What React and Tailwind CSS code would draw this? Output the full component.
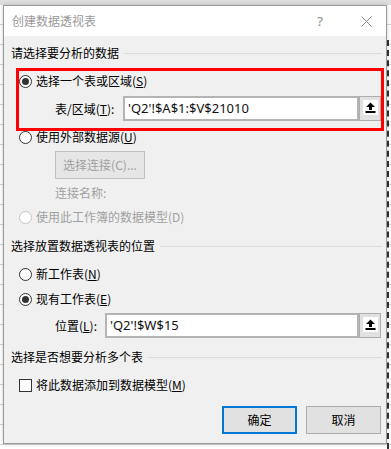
import React from "react";

const font = { fontFamily: '"Noto Sans CJK SC", "Noto Sans", sans-serif' };

function Radio({ checked, disabled }) {
  return (
    <span
      className={`flex h-[13px] w-[13px] shrink-0 items-center justify-center rounded-full border bg-white ${
        disabled ? "border-[#c4c4c4]" : "border-[#333333]"
      }`}
    >
      {checked && <span className="h-[7px] w-[7px] rounded-full bg-[#333333]" />}
    </span>
  );
}

function Header({ children }) {
  return (
    <div className="mt-[10px] flex h-[18px] items-center pl-[7px] pr-[4px]">
      <span className="text-[12px] leading-none text-black">{children}</span>
      <span className="ml-[5px] h-px flex-1 bg-[#dcdcdc]" />
    </div>
  );
}

function RefButton() {
  return (
    <div className="flex h-[25px] w-[22px] items-start justify-center border border-[#adadad] bg-[#e1e1e1] pt-[3px]">
      <div className="flex h-[15px] w-[15px] items-center justify-center bg-white">
        <svg width="11" height="11" viewBox="0 0 11 11">
          <path d="M5.5 0.5 L10 5 L7 5 L7 8 L4 8 L4 5 L1 5 Z" fill="#000" />
          <rect x="0.5" y="9" width="10" height="2" fill="#000" />
        </svg>
      </div>
    </div>
  );
}

function RefInput({ value, width }) {
  return (
    <div className="flex items-center">
      <div
        className={`flex h-[25px] items-center border-2 border-[#b4b4b4] bg-white pl-[3px] ${width}`}
      >
        <span
          className="text-[13px] leading-none text-[#111]"
          style={{ fontFamily: '"Noto Sans", sans-serif' }}
        >
          {value}
        </span>
      </div>
      <RefButton />
    </div>
  );
}

export default function App() {
  return (
    <div
      className="relative h-[449px] w-[391px] overflow-hidden bg-white"
      style={font}
    >
      {/* spreadsheet background */}
      <div className="absolute inset-0 flex flex-col">
        <div className="h-[5px] bg-[#dedede]" />
        {Array.from({ length: 22 }).map((_, i) => (
          <div key={i} className="h-[20px] border-b border-[#d4d4d4]" />
        ))}
      </div>
      <div className="absolute right-[2px] top-[40px] bottom-0 w-[2px] border-l-2 border-dashed border-[#333]" />

      {/* dialog */}
      <div className="absolute left-[3px] top-[5px] flex h-[439px] w-[384px] flex-col border border-[#9a9a9a] bg-[#f0f0f0] shadow-[0_0_4px_rgba(0,0,0,0.2)]">
        {/* title bar */}
        <div className="flex h-[30px] items-center bg-white pl-[8px]">
          <span className="text-[12px] leading-none text-[#9a9a9a]">创建数据透视表</span>
          <span className="ml-auto mr-[38px] text-[13px] leading-none text-[#8a8a8a]" style={{ fontFamily: '"Noto Sans", sans-serif' }}>?</span>
          <svg className="mr-[14px]" width="11" height="11" viewBox="0 0 11 11">
            <path d="M0.5 0.5 L10.5 10.5 M10.5 0.5 L0.5 10.5" stroke="#8a8a8a" strokeWidth="1" />
          </svg>
        </div>

        {/* body */}
        <div className="flex flex-1 flex-col">
          <div className="mt-[8px] flex h-[18px] items-center pl-[7px] pr-[4px]">
            <span className="text-[12px] leading-none text-black">请选择要分析的数据</span>
            <span className="ml-[5px] h-px flex-1 bg-[#dcdcdc]" />
          </div>

          {/* red box */}
          <div className="ml-[12px] mt-[6px] flex h-[63px] w-[368px] flex-col border-[3px] border-[#ff0000]">
            <div className="flex h-[20px] items-center">
              <Radio checked />
              <span className="ml-[4px] text-[12px] leading-none text-black">
                选择一个表或区域(<u>S</u>)
              </span>
            </div>
            <div className="mt-[5px] flex h-[25px] items-center">
              <span className="ml-[36px] w-[68px] text-[12px] leading-none text-black">
                表/区域(<u>T</u>):
              </span>
              <RefInput value="'Q2'!$A$1:$V$21010" width="w-[236px]" />
            </div>
          </div>

          <div className="flex h-[12px] items-center pl-[15px]">
            <Radio />
            <span className="ml-[4px] text-[12px] leading-none text-black">
              使用外部数据源(<u>U</u>)
            </span>
          </div>

          <div className="ml-[51px] mt-[8px] flex h-[28px] w-[90px] items-center justify-center border border-[#bfbfbf] bg-[#e6e6e6]">
            <span className="text-[12px] leading-none text-[#a0a0a0]">选择连接(C)...</span>
          </div>

          <div className="mt-[4px] flex h-[20px] items-center pl-[51px]">
            <span className="text-[12px] leading-none text-[#a0a0a0]">连接名称:</span>
          </div>

          <div className="mt-[4px] flex h-[20px] items-center pl-[15px]">
            <Radio disabled />
            <span className="ml-[4px] text-[12px] leading-none text-[#a0a0a0]">
              使用此工作簿的数据模型(D)
            </span>
          </div>

          <Header>选择放置数据透视表的位置</Header>

          <div className="mt-[9px] flex h-[20px] items-center pl-[15px]">
            <Radio />
            <span className="ml-[4px] text-[12px] leading-none text-black">
              新工作表(<u>N</u>)
            </span>
          </div>

          <div className="mt-[5px] flex h-[20px] items-center pl-[15px]">
            <Radio checked />
            <span className="ml-[4px] text-[12px] leading-none text-black">
              现有工作表(<u>E</u>)
            </span>
          </div>

          <div className="mt-[4px] flex h-[25px] items-center">
            <span className="ml-[51px] w-[50px] text-[12px] leading-none text-black">
              位置(<u>L</u>):
            </span>
            <RefInput value="'Q2'!$W$15" width="w-[254px]" />
          </div>

          <Header>选择是否想要分析多个表</Header>

          <div className="mt-[9px] flex h-[20px] items-center pl-[15px]">
            <span className="h-[13px] w-[13px] shrink-0 border border-[#333333] bg-white" />
            <span className="ml-[4px] text-[12px] leading-none text-black">
              将此数据添加到数据模型(<u>M</u>)
            </span>
          </div>

          <div className="mt-[11px] flex h-[28px] items-center">
            <div className="ml-[218px] flex h-[28px] w-[75px] items-center justify-center border-2 border-[#0078d7] bg-[#e1e1e1]">
              <span className="text-[12px] leading-none text-black">确定</span>
            </div>
            <div className="ml-[9px] flex h-[28px] w-[75px] items-center justify-center border border-[#adadad] bg-[#e1e1e1]">
              <span className="text-[12px] leading-none text-black">取消</span>
            </div>
          </div>
        </div>
      </div>
    </div>
  );
}
